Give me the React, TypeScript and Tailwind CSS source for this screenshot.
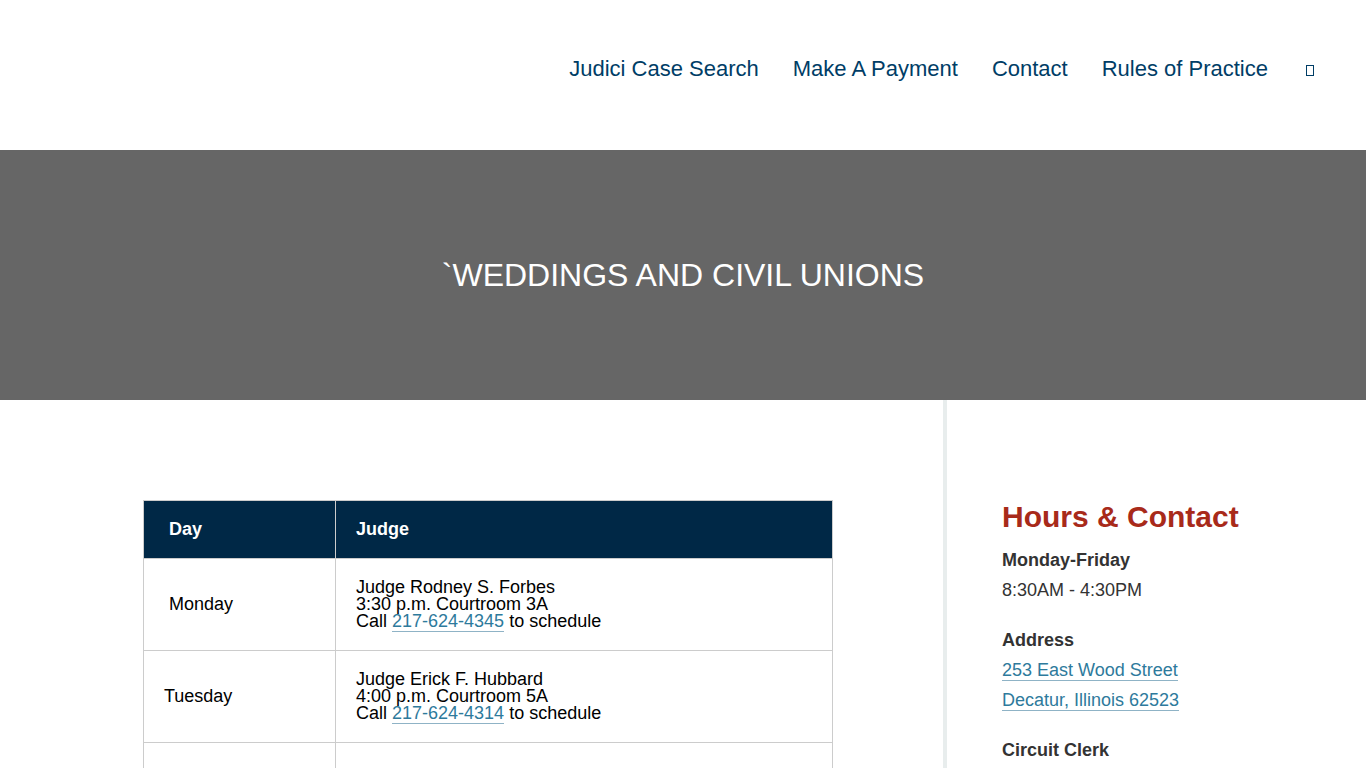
import React from "react";

const navItems = ["Judici Case Search", "Make A Payment", "Contact", "Rules of Practice"];

const schedule = [
  { day: "Monday", inset: "pl-[25px]", judge: "Judge Rodney S. Forbes", place: "3:30 p.m. Courtroom 3A", phone: "217-624-4345" },
  { day: "Tuesday", inset: "pl-5", judge: "Judge Erick F. Hubbard", place: "4:00 p.m. Courtroom 5A", phone: "217-624-4314" },
  { day: "", inset: "pl-5", judge: "", place: "", phone: "" },
];

function TextLink({ href, children }: { href: string; children: React.ReactNode }) {
  return (
    <a href={href} className="border-b border-[#8fb3c6] text-[#2e7a9c]">
      {children}
    </a>
  );
}

export default function App() {
  return (
    <div className="min-h-screen bg-white font-['Liberation_Sans',Arial,sans-serif] text-lg text-black">
      <header className="flex h-[150px] items-center justify-end pr-[50px]">
        <nav className="flex items-center gap-[34px] pb-3 text-[22px] text-[#003d66]">
          {navItems.map((item) => (
            <a key={item} href="#">{item}</a>
          ))}
          <button type="button" aria-label="Search" className="ml-0.5 flex h-3.5 w-3 items-end justify-center">
            <span className="h-[11px] w-2 border border-[#003d66]" />
          </button>
        </nav>
      </header>
      <section className="flex h-[250px] items-center justify-center bg-[#666666]">
        <h1 className="pt-0.5 text-[32px] text-white">`WEDDINGS AND CIVIL UNIONS</h1>
      </section>
      <div className="flex">
        <main className="min-w-0 flex-1 pt-[100px] pr-[110px] pl-[143px]">
          <table className="w-full border-collapse text-left leading-[17px]">
            <thead>
              <tr className="h-[58px] bg-[#002846] text-white">
                <th className="w-[192px] border border-[#cccccc] pl-[25px]">Day</th>
                <th className="border border-[#cccccc] pl-5">Judge</th>
              </tr>
            </thead>
            <tbody>
              {schedule.map((row, index) => (
                <tr key={index} className="h-[92px]">
                  <td className={`border border-[#cccccc] ${row.inset}`}>{row.day}</td>
                  <td className="border border-[#cccccc] pl-5">
                    {row.judge && (
                      <>
                        {row.judge}<br />{row.place}<br />
                        Call <TextLink href={`tel:${row.phone}`}>{row.phone}</TextLink> to schedule
                      </>
                    )}
                  </td>
                </tr>
              ))}
            </tbody>
          </table>
        </main>
        <aside className="w-[423px] shrink-0 border-l-4 border-[#e8eded] pt-[100px] pl-[55px] leading-[30px] text-[#333333]">
          <h2 className="mb-3 text-[30px] leading-[33px] font-bold text-[#a82a1a]">Hours &amp; Contact</h2>
          <p className="mb-5"><strong>Monday-Friday</strong><br />8:30AM - 4:30PM</p>
          <p className="mb-5">
            <strong>Address</strong><br />
            <TextLink href="#">253 East Wood Street</TextLink><br />
            <TextLink href="#">Decatur, Illinois 62523</TextLink>
          </p>
          <p><strong>Circuit Clerk</strong></p>
        </aside>
      </div>
    </div>
  );
}
